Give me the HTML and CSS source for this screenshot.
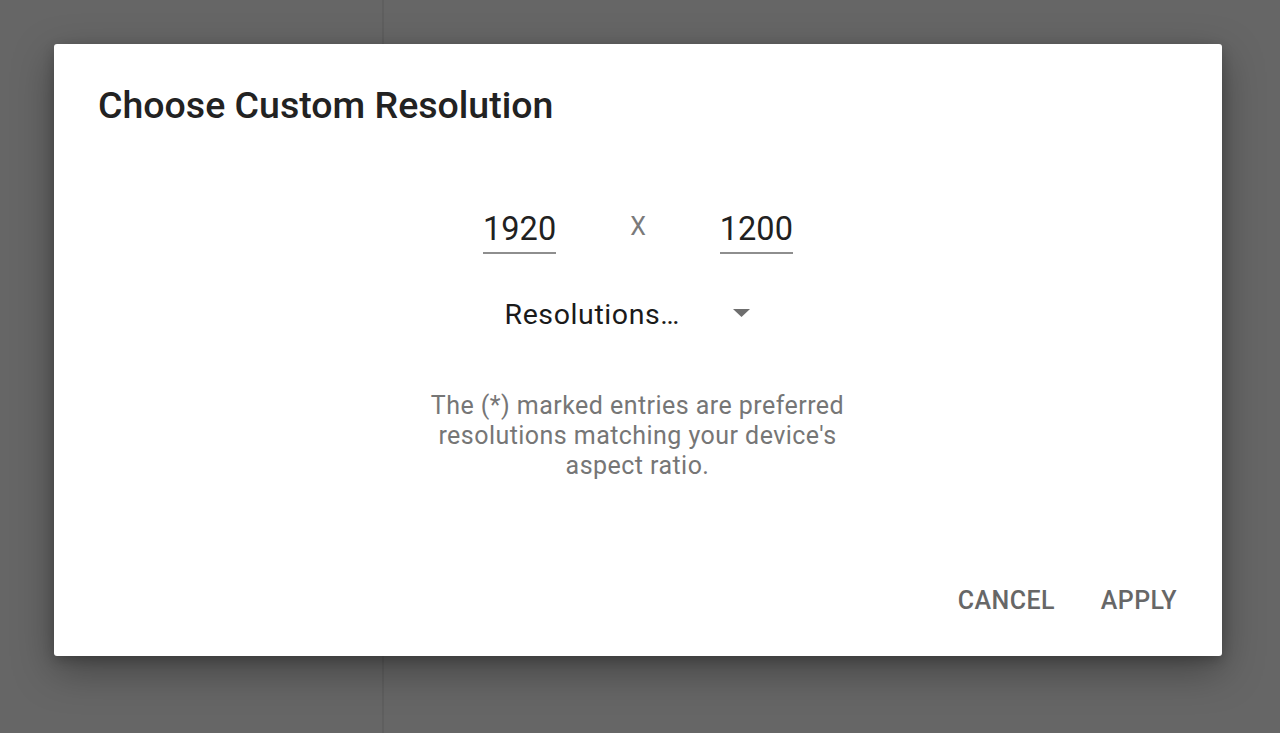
FILE: index.html
```html
<!DOCTYPE html>
<html>
<head>
<meta charset="utf-8">
<link rel="stylesheet" href="styles.css">
</head>
<body>
<div class="screen">
  <div class="pane-left"></div>
  <div class="pane-right"></div>
  <div class="overlay">
    <div class="dialog">
      <h1 class="title">Choose Custom Resolution</h1>
      <div class="dims">
        <div class="field">1920</div>
        <div class="times">X</div>
        <div class="field">1200</div>
      </div>
      <div class="spinner-row">
        <div class="spinner">
          <span class="spinner-text">Resolutions…</span>
          <svg class="arrow" width="17" height="8" viewBox="0 0 17 8"><path d="M0 0H17L8.5 8Z" fill="#6e6e6e"/></svg>
        </div>
      </div>
      <p class="note">The (*) marked entries are preferred<br>resolutions matching your device's<br>aspect ratio.</p>
      <div class="actions">
        <span class="btn">CANCEL</span>
        <span class="btn">APPLY</span>
      </div>
    </div>
  </div>
</div>
</body>
</html>
```
FILE: styles.css
```css
html, body {
  margin: 0;
  padding: 0;
}
body {
  background: #666666;
  font-family: Roboto, "Noto Sans", sans-serif;
}
.screen {
  position: relative;
  width: 1280px;
  height: 733px;
  display: flex;
  overflow: hidden;
}
.pane-left {
  width: 382px;
  border-right: 2px solid #5f5f5f;
  background: #666666;
}
.pane-right {
  flex: 1;
  background: #666666;
}
.overlay {
  position: absolute;
  inset: 0;
  padding: 44px 0 0 54px;
}
.dialog {
  width: 1168px;
  height: 612px;
  box-sizing: border-box;
  background: #ffffff;
  border-radius: 3px;
  box-shadow: 0 14px 40px rgba(0, 0, 0, 0.35), 0 4px 12px rgba(0, 0, 0, 0.2);
  padding: 39px 45px 37px 44px;
  display: flex;
  flex-direction: column;
}
.title {
  margin: 0;
  font-size: 37.5px;
  line-height: 44px;
  font-weight: 500;
  color: #222222;
}
.dims {
  margin-top: 82px;
  display: flex;
  justify-content: center;
  align-items: flex-start;
  gap: 74px;
  padding-left: 1px;
}
.field {
  font-size: 32.5px;
  line-height: 40px;
  color: #212121;
  padding-bottom: 3px;
  border-bottom: 2px solid #8e8e8e;
}
.times {
  font-size: 25px;
  line-height: 40px;
  margin-top: -2px;
  color: #7a7a7a;
}
.spinner-row {
  margin-top: 43px;
  display: flex;
  justify-content: center;
}
.spinner {
  width: 266px;
  display: flex;
  align-items: center;
  justify-content: space-between;
  padding-right: 21px;
  box-sizing: border-box;
}
.spinner-text {
  font-size: 28.5px;
  line-height: 36px;
  letter-spacing: 0.6px;
  color: #1a1a1a;
}
.arrow {
  display: block;
  margin-top: -4px;
}
.note {
  margin: 58px 0 0;
  text-align: center;
  font-size: 25px;
  line-height: 30px;
  letter-spacing: 0.45px;
  color: #767676;
}
.actions {
  margin-top: auto;
  display: flex;
  justify-content: flex-end;
  gap: 46px;
}
.btn {
  font-size: 25px;
  line-height: 36px;
  font-weight: 500;
  letter-spacing: 0.4px;
  color: #676767;
}
```
